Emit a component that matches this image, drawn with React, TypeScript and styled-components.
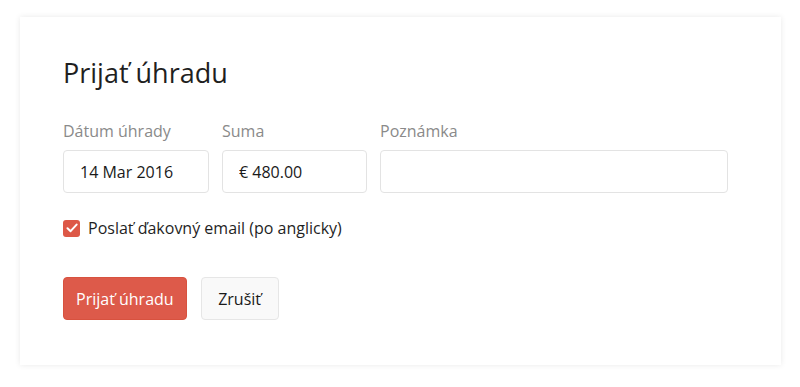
import React, { useState } from "react";
import styled, { createGlobalStyle } from "styled-components";

const GlobalStyle = createGlobalStyle`
  html, body {
    margin: 0;
    padding: 0;
    background: #ffffff;
    font-family: "Open Sans", "Liberation Sans", sans-serif;
    color: #222;
  }
  * { box-sizing: border-box; }
`;

const Page = styled.div`
  padding: 17px 19px 22px 20px;
`;

const Card = styled.div`
  background: #fff;
  box-shadow: 0 0 6px rgba(0, 0, 0, 0.09);
  padding: 38px 43px 44px 43px;
  height: 348px;
`;

const Title = styled.h1`
  margin: 0 0 29px 0;
  font-size: 27px;
  line-height: 36px;
  font-weight: 400;
  color: #1f1f1f;
`;

const FieldRow = styled.div`
  display: flex;
  gap: 13px;
`;

const Field = styled.div<{ $width: number }>`
  display: flex;
  flex-direction: column;
  gap: 8px;
  width: ${(p) => p.$width}px;
`;

const Label = styled.label`
  font-size: 16px;
  line-height: 22px;
  color: #8a8a8a;
`;

const Input = styled.input`
  height: 43px;
  width: 100%;
  border: 1px solid #e3e3e3;
  border-radius: 4px;
  padding: 0 16px;
  font-family: inherit;
  font-size: 16px;
  color: #1a1a1a;
  outline: none;
  background: #fff;
`;

const CheckRow = styled.label`
  display: flex;
  align-items: center;
  gap: 8px;
  margin-top: 24px;
  font-size: 16px;
  line-height: 22px;
  color: #1f1f1f;
  cursor: pointer;
`;

const Box = styled.span<{ $on: boolean }>`
  width: 17px;
  height: 17px;
  border-radius: 3px;
  background: ${(p) => (p.$on ? "#dd5847" : "#fff")};
  border: ${(p) => (p.$on ? "none" : "1px solid #ccc")};
  display: flex;
  align-items: center;
  justify-content: center;
`;

const Actions = styled.div`
  display: flex;
  gap: 14px;
  margin-top: 38px;
`;

const Button = styled.button<{ $primary?: boolean }>`
  height: 43px;
  padding: 0 ${(p) => (p.$primary ? 12 : 16.5)}px;
  border-radius: 4px;
  font-family: inherit;
  font-size: 16px;
  line-height: 22px;
  cursor: pointer;
  background: ${(p) => (p.$primary ? "#dd5a4a" : "#f9f9f9")};
  color: ${(p) => (p.$primary ? "#fff" : "#1a1a1a")};
  border: 1px solid ${(p) => (p.$primary ? "#d8523f" : "#e6e6e6")};
`;

const App: React.FC = () => {
  const [thanks, setThanks] = useState(true);

  return (
    <Page>
      <GlobalStyle />
      <Card>
        <Title>Prijať úhradu</Title>

        <FieldRow>
          <Field $width={146}>
            <Label>Dátum úhrady</Label>
            <Input defaultValue="14 Mar 2016" />
          </Field>
          <Field $width={145}>
            <Label>Suma</Label>
            <Input defaultValue="€ 480.00" />
          </Field>
          <Field $width={348}>
            <Label>Poznámka</Label>
            <Input defaultValue="" />
          </Field>
        </FieldRow>

        <CheckRow onClick={() => setThanks(!thanks)}>
          <Box $on={thanks}>
            {thanks && (
              <svg width="12" height="10" viewBox="0 0 12 10">
                <path
                  d="M1.5 5.2 L4.6 8.2 L10.6 1.6"
                  fill="none"
                  stroke="#fff"
                  strokeWidth="2"
                  strokeLinecap="round"
                  strokeLinejoin="round"
                />
              </svg>
            )}
          </Box>
          Poslať ďakovný email (po anglicky)
        </CheckRow>

        <Actions>
          <Button $primary>Prijať úhradu</Button>
          <Button>Zrušiť</Button>
        </Actions>
      </Card>
    </Page>
  );
};

export default App;
